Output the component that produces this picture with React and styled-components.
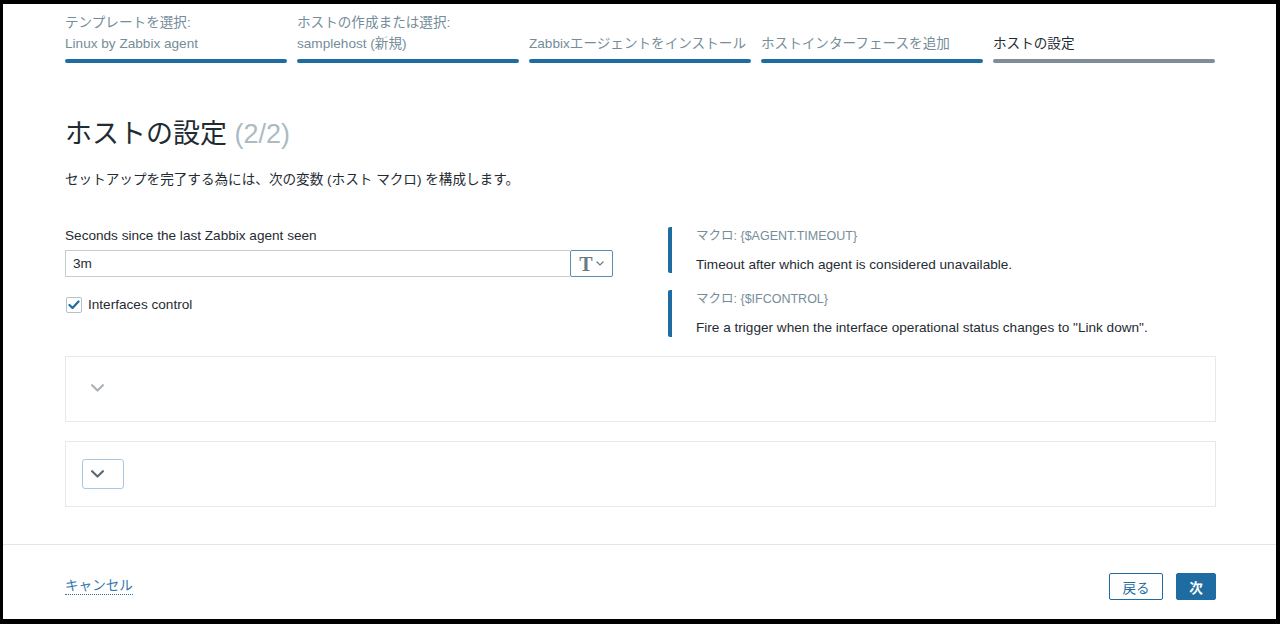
import React from "react";
import styled, { createGlobalStyle } from "styled-components";

const Global = createGlobalStyle`
  html, body { margin: 0; padding: 0; background: #000; }
  body { font-family: "Liberation Sans", Arial, "Noto Sans CJK JP", sans-serif; color: #1f2c33; }
  * { box-sizing: border-box; }
`;

const Frame = styled.div`
  margin: 4px 4px 5px 3px;
  width: 1273px;
  height: 615px;
  background: #fff;
  display: flex;
  flex-direction: column;
  overflow: hidden;
`;

const Content = styled.div`
  flex: 1;
  padding: 8px 0 0 62px;
  width: 1213px;
`;

const Stepper = styled.div`
  display: grid;
  grid-template-columns: repeat(5, 222px);
  column-gap: 10px;
`;

const Step = styled.div`
  display: flex;
  flex-direction: column;
  justify-content: flex-end;
`;

const StepLabel = styled.div`
  font-size: 13.6px;
  line-height: 21px;
  height: 42px;
  display: flex;
  flex-direction: column;
  justify-content: flex-end;
  color: ${(p) => (p.$current ? "#1f2c33" : "#768d99")};
  white-space: nowrap;
`;

const StepBar = styled.div`
  margin-top: 5px;
  height: 4px;
  border-radius: 2px;
  background: ${(p) => (p.$current ? "#7e8d97" : "#1f6ca3")};
`;

const Title = styled.h1`
  margin: 55px 0 0;
  font-size: 27px;
  line-height: 32px;
  font-weight: normal;
  color: #1f2c33;
  white-space: nowrap;
`;

const Counter = styled.span`
  color: #acbbc2;
`;

const Subtitle = styled.p`
  margin: 21px 0 0;
  font-size: 13.6px;
  line-height: 18px;
  color: #1f2c33;
`;

const FormGrid = styled.div`
  margin-top: 38px;
  display: grid;
  grid-template-columns: 548px 1fr;
  column-gap: 55px;
`;

const LeftCol = styled.div`
  display: flex;
  flex-direction: column;
`;

const FieldLabel = styled.label`
  font-size: 13.6px;
  line-height: 18px;
`;

const InputRow = styled.div`
  margin-top: 5px;
  display: flex;
  height: 27px;
`;

const TextInput = styled.div`
  flex: 1;
  border: 1px solid #c5cdd1;
  border-right: none;
  font-size: 13.6px;
  line-height: 25px;
  padding-left: 7px;
`;

const TypeButton = styled.div`
  width: 43px;
  border: 1px solid #5b8cb6;
  border-radius: 2px;
  display: flex;
  align-items: center;
  justify-content: center;
  gap: 3px;
  color: #6a7a84;
`;

const TGlyph = styled.span`
  font-family: "Liberation Serif", "Times New Roman", serif;
  font-weight: bold;
  font-size: 20px;
  line-height: 20px;
`;

const CheckRow = styled.label`
  margin-top: 19px;
  display: flex;
  align-items: center;
  gap: 6px;
  font-size: 13.6px;
  line-height: 18px;
`;

const CheckBox = styled.span`
  width: 16px;
  height: 16px;
  margin-left: 1px;
  border: 1px solid #b4c2ca;
  border-radius: 2px;
  display: flex;
  align-items: center;
  justify-content: center;
  background: #fff;
`;

const RightCol = styled.div`
  display: flex;
  flex-direction: column;
  gap: 17px;
`;

const MacroItem = styled.div`
  border-left: 4px solid #1f6ca3;
  border-radius: 2px;
  padding: 1px 0 0 24px;
  height: ${(p) => p.$h}px;
`;

const MacroName = styled.div`
  font-size: 12.5px;
  line-height: 16px;
  color: #768d99;
`;

const MacroDesc = styled.div`
  margin-top: 12px;
  font-size: 13.6px;
  line-height: 18px;
  color: #1f2c33;
  white-space: nowrap;
`;

const Collapsible = styled.div`
  margin-top: ${(p) => p.$mt}px;
  width: 1151px;
  height: 66px;
  border: 1px solid #e6e8ea;
  display: flex;
  align-items: center;
  padding-left: 16px;
`;

const ToggleButton = styled.div`
  width: 42px;
  height: 30px;
  border: 1px solid ${(p) => (p.$focused ? "#a9c8e4" : "transparent")};
  border-radius: 3px;
  display: flex;
  align-items: center;
  justify-content: flex-start;
  padding-left: 8px;
  color: ${(p) => (p.$focused ? "#5a6972" : "#a8b2b8")};
  margin-top: ${(p) => (p.$focused ? "0" : "-2px")};
`;

const Footer = styled.div`
  height: 75px;
  border-top: 1px solid #e3e6e8;
  display: flex;
  align-items: flex-start;
  justify-content: space-between;
  padding: 28px 60px 0 62px;
`;

const CancelLink = styled.a`
  margin-top: 4px;
  font-size: 13.6px;
  line-height: 17px;
  color: #2f76ad;
  text-decoration: none;
  border-bottom: 1px dotted #2f76ad;
  cursor: pointer;
`;

const Buttons = styled.div`
  display: flex;
  gap: 13px;
`;

const Button = styled.button`
  height: 27px;
  padding: 0;
  width: ${(p) => (p.$primary ? "40px" : "54px")};
  font-family: inherit;
  font-size: 13.6px;
  border-radius: 2px;
  border: 1px solid #1f6ca3;
  background: ${(p) => (p.$primary ? "#1f6ca3" : "#fff")};
  color: ${(p) => (p.$primary ? "#fff" : "#1f6ca3")};
  font-weight: ${(p) => (p.$primary ? "bold" : "normal")};
`;

const Chevron = ({ size = 13 }) => (
  <svg width={size} height={size * 0.6} viewBox="0 0 12 7" fill="none">
    <path d="M1 1l5 5 5-5" stroke="currentColor" strokeWidth="2" strokeLinecap="round" strokeLinejoin="round" />
  </svg>
);

const steps = [
  ["テンプレートを選択:", "Linux by Zabbix agent"],
  ["ホストの作成または選択:", "samplehost (新規)"],
  [null, "Zabbixエージェントをインストール"],
  [null, "ホストインターフェースを追加"],
  [null, "ホストの設定"],
];

export default function App() {
  return (
    <>
      <Global />
      <Frame>
        <Content>
          <Stepper>
            {steps.map(([a, b], i) => (
              <Step key={i}>
                <StepLabel $current={i === 4}>
                  {a && <div>{a}</div>}
                  <div>{b}</div>
                </StepLabel>
                <StepBar $current={i === 4} />
              </Step>
            ))}
          </Stepper>

          <Title>
            ホストの設定 <Counter>(2/2)</Counter>
          </Title>
          <Subtitle>セットアップを完了する為には、次の変数 (ホスト マクロ) を構成します。</Subtitle>

          <FormGrid>
            <LeftCol>
              <FieldLabel>Seconds since the last Zabbix agent seen</FieldLabel>
              <InputRow>
                <TextInput>3m</TextInput>
                <TypeButton>
                  <TGlyph>T</TGlyph>
                  <svg width="8" height="5" viewBox="0 0 8 5" fill="none">
                    <path d="M1 1l3 3 3-3" stroke="currentColor" strokeWidth="1.2" strokeLinecap="round" />
                  </svg>
                </TypeButton>
              </InputRow>
              <CheckRow>
                <CheckBox>
                  <svg width="12" height="10" viewBox="0 0 12 10" fill="none">
                    <path d="M1.5 5l3 3 6-6.5" stroke="#1f6ca3" strokeWidth="2.2" strokeLinecap="round" strokeLinejoin="round" />
                  </svg>
                </CheckBox>
                Interfaces control
              </CheckRow>
            </LeftCol>
            <RightCol>
              <MacroItem $h={46}>
                <MacroName>マクロ: {"{$AGENT.TIMEOUT}"}</MacroName>
                <MacroDesc>Timeout after which agent is considered unavailable.</MacroDesc>
              </MacroItem>
              <MacroItem $h={47}>
                <MacroName>マクロ: {"{$IFCONTROL}"}</MacroName>
                <MacroDesc>Fire a trigger when the interface operational status changes to "Link down".</MacroDesc>
              </MacroItem>
            </RightCol>
          </FormGrid>

          <Collapsible $mt={19}>
            <ToggleButton>
              <Chevron />
            </ToggleButton>
          </Collapsible>
          <Collapsible $mt={19}>
            <ToggleButton $focused>
              <Chevron />
            </ToggleButton>
          </Collapsible>
        </Content>
        <Footer>
          <CancelLink>キャンセル</CancelLink>
          <Buttons>
            <Button>戻る</Button>
            <Button $primary>次</Button>
          </Buttons>
        </Footer>
      </Frame>
    </>
  );
}
